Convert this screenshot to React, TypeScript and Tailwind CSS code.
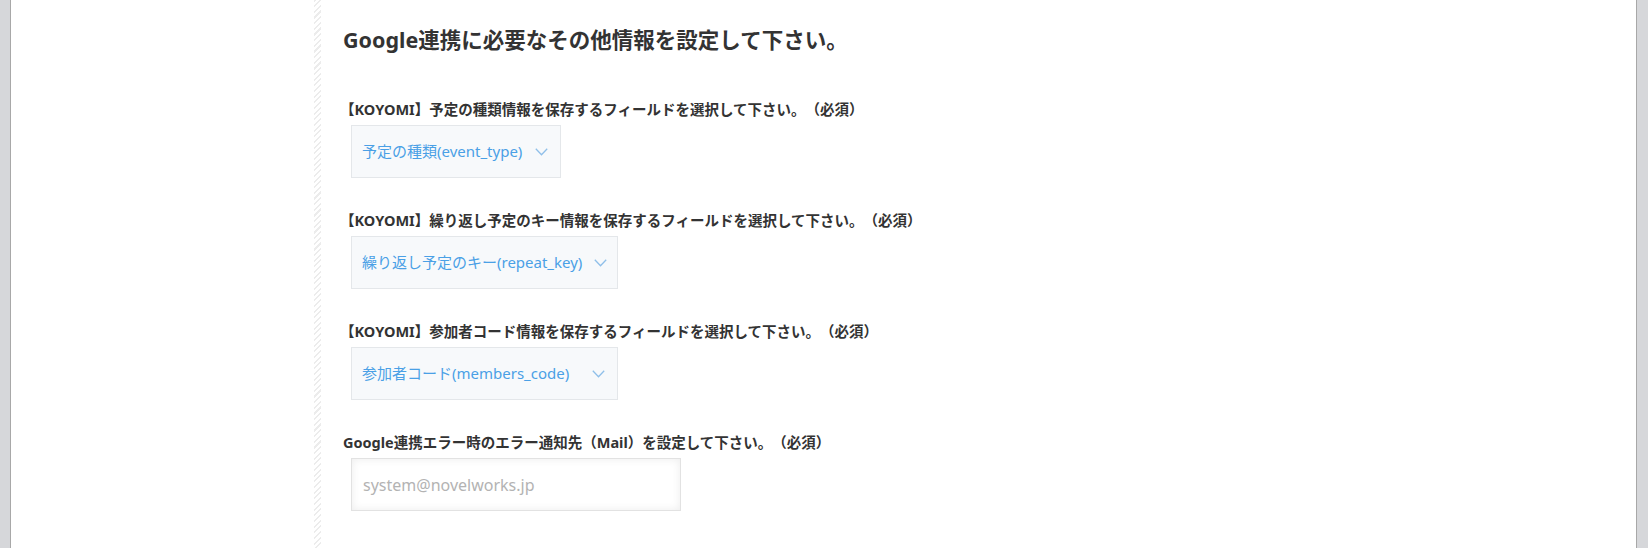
import React from "react";

const Chevron = () => (
  <svg width="13" height="8" viewBox="0 0 13 8" className="ml-3 shrink-0">
    <path d="M0.8 0.8 L6.5 6.8 L12.2 0.8" fill="none" stroke="#8fbfe9" strokeWidth="1.3" />
  </svg>
);

const SelectBox = ({ text, width }: { text: string; width: string }) => (
  <div
    className={`${width} h-[53px] ml-2 flex items-center justify-between border border-[#e4e7ea] bg-[#f7f9fb] pl-[10px] pr-[12px] text-[15px] text-[#4aa0e6] whitespace-nowrap`}
  >
    <span>{text}</span>
    <Chevron />
  </div>
);

const Label = ({ children }: { children: React.ReactNode }) => (
  <div className="text-[14.5px] font-bold text-[#333] leading-[20px] whitespace-nowrap">{children}</div>
);

export default function App() {
  return (
    <div
      className="w-[1648px] h-[548px] flex bg-white overflow-hidden [text-spacing-trim:space-all]"
      style={{ fontFamily: '"Noto Sans", "Noto Sans CJK JP", sans-serif' }}
    >
      <div className="w-[11px] bg-[#d6d7da] border-r border-[#a8a8a8] shrink-0" />
      <div className="w-[303px] bg-white shrink-0" />
      <div className="w-[7px] shrink-0 bg-[repeating-linear-gradient(135deg,#ececec_0px,#ececec_1.5px,#ffffff_1.5px,#ffffff_4px)]" />
      <div className="flex-1 pl-[22px] pt-[24px]">
        <h1 className="text-[21.5px] font-bold text-[#333] leading-[32px] whitespace-nowrap">
          Google連携に必要なその他情報を設定して下さい。
        </h1>
        <div className="mt-[43px] flex flex-col">
          <div className="-ml-[3px]">
            <Label>【KOYOMI】予定の種類情報を保存するフィールドを選択して下さい。（必須）</Label>
          </div>
          <div className="mt-[6px]">
            <SelectBox text="予定の種類(event_type)" width="w-[210px]" />
          </div>
          <div className="mt-[32px] -ml-[3px]">
            <Label>【KOYOMI】繰り返し予定のキー情報を保存するフィールドを選択して下さい。（必須）</Label>
          </div>
          <div className="mt-[6px]">
            <SelectBox text="繰り返し予定のキー(repeat_key)" width="w-[267px]" />
          </div>
          <div className="mt-[32px] -ml-[3px]">
            <Label>【KOYOMI】参加者コード情報を保存するフィールドを選択して下さい。（必須）</Label>
          </div>
          <div className="mt-[6px]">
            <SelectBox text="参加者コード(members_code)" width="w-[267px]" />
          </div>
          <div className="mt-[32px]">
            <Label>Google連携エラー時のエラー通知先（Mail）を設定して下さい。（必須）</Label>
          </div>
          <div className="mt-[6px] ml-2">
            <input
              placeholder="system@novelworks.jp"
              className="w-[330px] h-[53px] border border-[#e2e2e2] bg-white px-[11px] text-[16px] text-[#333] placeholder:text-[#b3b3b3] shadow-[inset_0_0_8px_rgba(0,0,0,0.08)] outline-none"
            />
          </div>
        </div>
      </div>
      <div className="w-[12px] bg-[#d6d7da] border-l border-[#a8a8a8] shrink-0" />
    </div>
  );
}
